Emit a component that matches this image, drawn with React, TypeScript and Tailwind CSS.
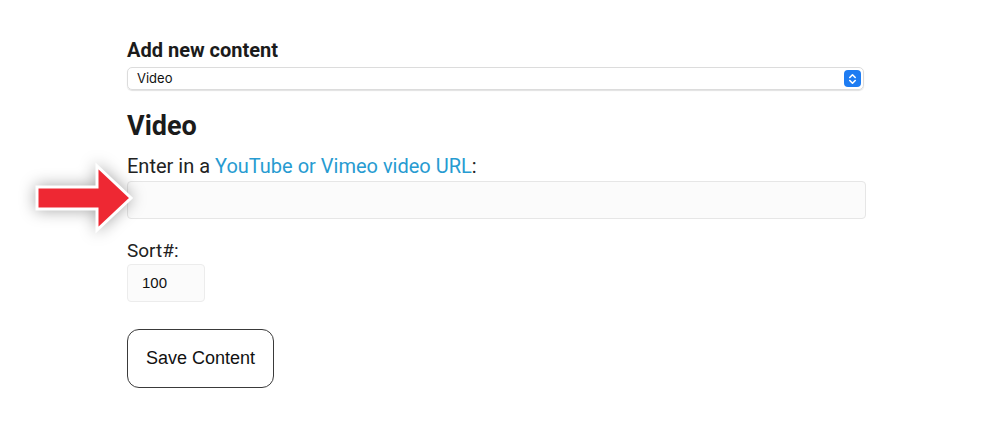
export default function App() {
  return (
    <div className="relative w-[1000px] h-[431px] bg-white overflow-hidden" style={{ fontFamily: "Roboto, 'Liberation Sans', sans-serif" }}>
      <div className="ml-[127px] w-[739px] pt-[38px] flex flex-col text-[#1b1b1b]">
        <h2 className="text-[20px] font-bold leading-[24px]">Add new content</h2>
        <div className="mt-[5px] w-[737px] h-[23px] rounded-[5px] border border-[#dcdcdc] shadow-[0_1px_1px_rgba(0,0,0,0.12)] flex items-center justify-between pl-[9px] pr-[2px]">
          <span className="text-[13px] font-['Inter',sans-serif] text-[#111]">Video</span>
          <span className="w-[17px] h-[17px] rounded-[4px] bg-[#1e7cf2] flex items-center justify-center">
            <svg width="9" height="12" viewBox="0 0 9 12" fill="none" stroke="white" strokeWidth="1.6" strokeLinecap="round" strokeLinejoin="round">
              <path d="M1.8 4.5 4.5 1.8 7.2 4.5" />
              <path d="M1.8 7.5 4.5 10.2 7.2 7.5" />
            </svg>
          </span>
        </div>
        <h3 className="mt-[20px] text-[27px] font-bold leading-[32px]">Video</h3>
        <p className="mt-[12px] text-[20px] leading-[24px] text-[#222]">
          Enter in a <a className="text-[#279bd1]">YouTube or Vimeo video URL</a>:
        </p>
        <div className="mt-[3px] w-[739px] h-[38px] rounded-[4px] border border-[#e6e6e6] bg-[#fbfbfb]" />
        <p className="mt-[20px] text-[19px] leading-[24px] text-[#222]">Sort#:</p>
        <div className="mt-[1px] w-[78px] h-[38px] rounded-[4px] border border-[#ececec] bg-[#fbfbfb] flex items-center pl-[14px] text-[15px] font-['Liberation_Sans',sans-serif] text-[#111]">100</div>
        <button className="mt-[27px] w-[147px] h-[59px] rounded-[12px] border-[1.5px] border-[#3a3a3a] bg-white text-[18px] font-['Liberation_Sans',sans-serif] text-[#111]">
          Save Content
        </button>
      </div>

      {/* pointer arrow overlay */}
      <svg className="absolute left-[30px] top-[158px]" width="112" height="82" viewBox="0 0 112 82" style={{ filter: "drop-shadow(0 0 8px rgba(0,0,0,0.35))" }}>
        <path d="M7 29 H67 V8 L101 40 L67 72 V51 H7 Z" fill="#ee2833" stroke="white" strokeWidth="3" strokeLinejoin="miter" />
      </svg>
    </div>
  );
}
